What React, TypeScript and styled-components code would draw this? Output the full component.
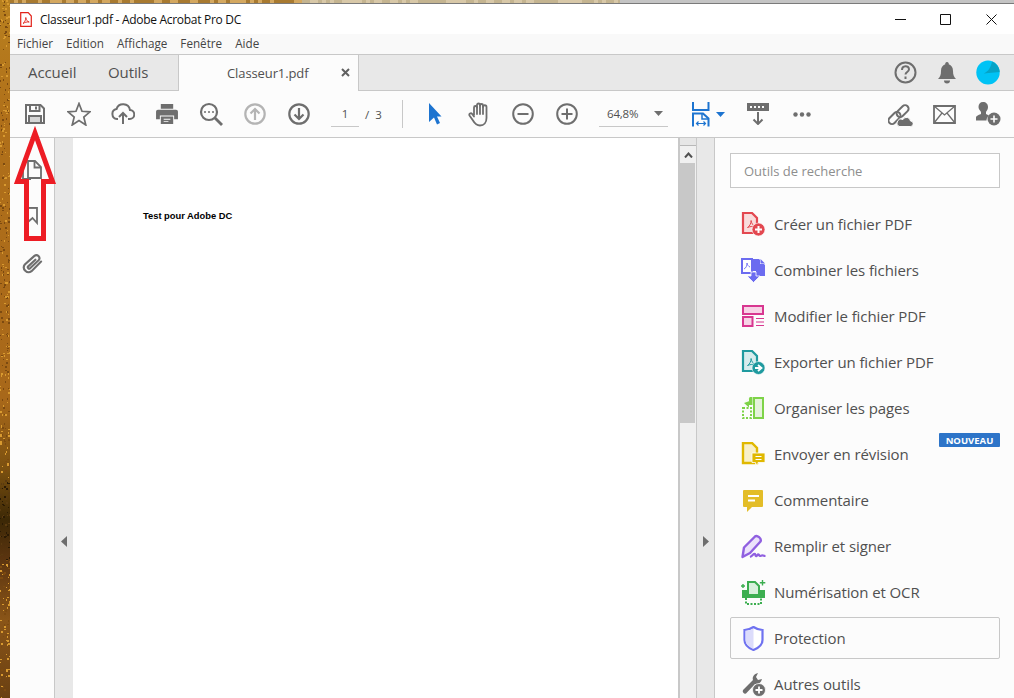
import React from "react";
import styled, { createGlobalStyle } from "styled-components";

const Global = createGlobalStyle`
  html, body { margin: 0; padding: 0; width: 1014px; height: 698px; overflow: hidden; }
  body { font-family: "Open Sans", "Noto Sans", sans-serif; color: #505050; }
  #root { width: 1014px; height: 698px; }
  svg { display: block; }
`;

const Desktop = styled.div`
  position: relative; width: 1014px; height: 698px; overflow: hidden; box-sizing: border-box;
  padding: 3px 0 0 10px; display: flex;
  background: linear-gradient(180deg, #b8801f 0, #b0701a 120px, #a8681a 400px, #7a5010 470px, #3c2806 520px, #5c3510 560px, #8a5518 620px, #6a4012 698px);
`;
const Wallpaper = styled.svg`position: absolute; left: 0; top: 0; pointer-events: none;`;
const Window = styled.div`
  position: relative; flex: 1; min-width: 0; display: flex; flex-direction: column; background: #fff;
  border-top: 1px solid #7a7a7a;
`;
const TitleBar = styled.div`height: 30px; display: flex; align-items: center; padding-left: 10px; background: #fff; flex: none;`;
const TitleText = styled.span`
  margin-left: 8px; font-size: 12px; color: #111; letter-spacing: -0.29px; flex: 1; white-space: nowrap;
`;
const WinButton = styled.div`width: 45.5px; height: 30px; display: flex; align-items: center; justify-content: center;`;
const MenuBar = styled.div`
  height: 21px; background: #f9f9f9; display: flex; align-items: center; gap: 13px; padding: 0 0 2px 7px; flex: none; box-sizing: border-box;
  border-bottom: 1px solid #c8c8c8;
`;
const MenuItem = styled.span`font-size: 11.7px; color: #444;`;
const TabBar = styled.div`
  height: 36px; background: #e8e8e8; display: flex; align-items: stretch; flex: none; box-sizing: border-box;
  border-bottom: 1px solid #c8c8c8;
`;
const NavTab = styled.div`
  font-size: 15px; color: #505050; display: flex; align-items: center; letter-spacing: -0.1px;
  width: 84px; padding: 0 0 2px 18px; box-sizing: border-box;
`;
const NavTabNarrow = styled(NavTab)`width: 84px; padding-left: 14px;`;
const DocTab = styled.div`
  width: 181px; margin-bottom: -1px; background: #fcfcfc; border-left: 1px solid #c8c8c8; border-right: 1px solid #c8c8c8;
  box-sizing: border-box; display: flex; align-items: center; padding-left: 48px; position: relative; font-size: 13px; color: #505050;
  letter-spacing: -0.1px;
`;
const TabClose = styled.span`position: absolute; left: 162px; top: 13px;`;
const TabRight = styled.div`flex: 1; display: flex; justify-content: flex-end; align-items: center; padding-right: 14px; gap: 20.5px;`;
const Toolbar = styled.div`
  height: 47px; background: #fcfcfc; border-bottom: 1px solid #c8c8c8; box-sizing: border-box; display: flex; align-items: center;
  padding: 0 4px 0 3px; flex: none;
`;
const ToolButton = styled.div`width: 44px; height: 46px; display: flex; align-items: center; justify-content: center; flex: none;`;
const PageBox = styled.div`
  margin-left: 10px; width: 28px; height: 26px; border-bottom: 1px solid #c8c8c8; display: flex; align-items: center; justify-content: center;
  font-size: 11.5px; color: #505050; box-sizing: border-box; flex: none;
`;
const PageCount = styled.div`margin-left: 6px; width: 37px; font-size: 11.5px; color: #505050; word-spacing: 3px; flex: none;`;
const Separator = styled.div`width: 1px; height: 28px; background: #c8c8c8; margin-right: 10px; flex: none;`;
const ZoomBox = styled.div`
  margin-left: 10px; width: 69px; height: 26px; border-bottom: 1px solid #c8c8c8; display: flex; align-items: center; justify-content: space-between;
  box-sizing: border-box; padding: 0 5px 0 8px; font-size: 11.5px; color: #505050; letter-spacing: -0.2px; flex: none;
`;
const FitButton = styled.div`width: 56px; margin-left: 12px; padding-left: 12px; box-sizing: border-box; display: flex; align-items: center; gap: 6px; flex: none; height: 46px;`;
const Spacer = styled.div`flex: 1;`;
const Main = styled.div`flex: 1; display: flex; min-height: 0;`;
const Rail = styled.div`
  width: 44px; flex: none; background: #fcfcfc; border-right: 1px solid #c8c8c8; display: flex; flex-direction: column; align-items: center;
  padding-top: 22px; box-sizing: content-box;
`;
const RailItem = styled.div<{ $h: number }>`height: ${p => p.$h}px; display: flex; justify-content: center; flex: none;`;
const Gutter = styled.div<{ $w: number; $border?: boolean }>`
  width: ${p => p.$w}px; flex: none; background: #e8e8e8; display: flex; justify-content: center; padding-top: 398px; box-sizing: border-box;
  ${p => p.$border ? "border-left: 1px solid #c8c8c8; border-right: 1px solid #c8c8c8;" : ""}
`;
const PageView = styled.div`flex: 1; min-width: 0; background: #fff; padding: 72px 0 0 70px; box-sizing: border-box; border-right: 2px solid #c8c8c8;`;
const PdfText = styled.div`font-family: "Liberation Sans", Arial, sans-serif; font-weight: 700; font-size: 9.35px; color: #000; line-height: 12px;`;
const ScrollBar = styled.div`width: 16px; flex: none; background: #f0f0f0; display: flex; flex-direction: column;`;
const ScrollHead = styled.div`height: 8px; background: #e6e6e6; border-bottom: 1px solid #b8b8b8; box-sizing: border-box; flex: none;`;
const ScrollUp = styled.div`height: 17px; display: flex; align-items: center; justify-content: center; flex: none;`;
const ScrollThumb = styled.div`height: 260px; background: #c8c8c8; flex: none; margin: 0 1px 0 0;`;
const Panel = styled.div`
  width: 299px; flex: none; background: #fcfcfc; box-sizing: border-box; padding: 15px 14px 0 15px; display: flex; flex-direction: column; gap: 4px;
`;
const SearchBox = styled.div`
  height: 35px; background: #fff; border: 1px solid #c8c8c8; box-sizing: border-box; font-size: 13px; color: #8e8e8e; display: flex; align-items: center;
  padding: 1px 0 0 13px; margin-bottom: 11px; flex: none;
`;
const Row = styled.div<{ $active?: boolean }>`
  position: relative; height: 42px; flex: none; box-sizing: border-box; display: flex; align-items: center; gap: 8px; padding-left: 10px;
  border: 1px solid ${p => p.$active ? "#c8c8c8" : "transparent"}; border-radius: 2px; font-size: 15px; color: #505050; letter-spacing: -0.1px; white-space: nowrap;
`;
const Badge = styled.span`
  position: absolute; right: -1px; top: -1px; width: 61px; height: 14px; background: #2d74c8; border-radius: 1px; color: #fff; font-size: 9.5px;
  font-weight: 700; display: flex; align-items: center; justify-content: center; letter-spacing: 0;
`;
const Arrow = styled.svg`position: absolute; left: -10px; top: -3px; pointer-events: none;`;

const G = "#6e6e6e";

const wall = (() => {
  let s = 7;
  const r = () => (s = (s * 16807) % 2147483647) / 2147483647;
  const out: { x: number; y: number; w: number; h: number; c: string }[] = [];
  for (let i = 0; i < 420; i++) {
    const y = r() * 698;
    const dark = y > 480 && y < 560;
    const c = r() > 0.55 ? (dark ? "#5a3a10" : "#d89a30") : (dark ? "#2a1a04" : "#7c4a10");
    out.push({ x: Math.floor(r() * 10), y: Math.floor(y), w: 1 + Math.floor(r() * 2), h: 1 + Math.floor(r() * 2), c });
  }
  for (let x = 10; x < 620; x += 4) {
    const t = r();
    out.push({ x, y: 0, w: 4, h: 3, c: x < 300 ? (t > 0.5 ? "#d4a860" : "#a87a30") : (t > 0.5 ? "#d8c8a8" : "#c4b490") });
  }
  out.push({ x: 620, y: 0, w: 394, h: 3, c: "#c4c4c4" });
  return out;
})();

const Pdf = ({ c }: { c: string }) => (
  <path d="M6.500 15.500c2-1 3.600-4 3.600-7 .4 3 2 5.300 4.400 6-2.800-.3-5.800 0-8 1z" fill="none" stroke={c} strokeWidth="1" />
);

const SaveIcon = () => (
  <svg width="20" height="20" viewBox="0 0 20 20" fill="none" stroke={G} strokeWidth="2">
    <path d="M4 12h12v7H4z" fill="#d5d5d5" stroke="none" />
    <path d="M1 1h14.500L19 4.500V19H1z" />
    <path d="M5 1v6h9.500V1M4 19v-7h12v7" />
    <path d="M11 2.500v3" />
  </svg>
);
const StarIcon = () => (
  <svg width="24" height="24" viewBox="0 0 24 24" fill="none" stroke={G} strokeWidth="1.700" strokeLinejoin="miter">
    <path d="M12 1.500l3 7.800 8 .5-6.200 5.200 2 8-6.800-4.500L5.200 23l2-8L1 9.800l8-.5z" />
  </svg>
);
const UploadIcon = () => (
  <svg width="24" height="24" viewBox="0 0 24 24" fill="none" stroke={G} strokeWidth="2">
    <path d="M7 17H6a5 5 0 0 1-.5-9.900A7 7 0 0 1 19 8a4.500 4.500 0 0 1-.5 9H17" />
    <path d="M12 22V11M8 15l4-4 4 4" />
  </svg>
);
const PrintIcon = () => (
  <svg width="22" height="20" viewBox="0 0 23 21" fill={G}>
    <path d="M5 0h13v5H5z" />
    <path fillRule="evenodd" d="M2 6h19a2 2 0 0 1 2 2v8h-4v-4H4v4H0V8a2 2 0 0 1 2-2z" />
    <path fillRule="evenodd" d="M5 13h13v8H5zM8 15.500v1h7v-1zM8 18v1h5v-1z" />
  </svg>
);
const SearchIcon = () => (
  <svg width="24" height="24" viewBox="0 0 24 24" fill="none" stroke={G}>
    <circle cx="10" cy="10" r="8" strokeWidth="2.200" />
    <path d="M16 16l7 7" strokeWidth="2.800" />
    <path d="M6 10h.01M10 10h.01M14 10h.01" strokeWidth="2" strokeLinecap="round" />
  </svg>
);
const CircleArrow = ({ c, down }: { c: string; down?: boolean }) => (
  <svg width="22" height="22" viewBox="0 0 22 22" fill="none" stroke={c} strokeWidth="2.200">
    <circle cx="11" cy="11" r="9.700" />
    {down ? <path d="M11 5v11M6.500 11.500L11 16l4.500-4.500" /> : <path d="M11 17V6M6.500 10.500L11 6l4.500 4.500" />}
  </svg>
);
const CursorIcon = () => (
  <svg width="13" height="22" viewBox="0 0 13 22" fill="#1d74d0">
    <path d="M0 0l12.500 13.500H8L11 20l-3 1.500L5 14.500 0 19z" />
  </svg>
);
const HandIcon = () => (
  <svg width="24" height="25" viewBox="0 0 24 25" fill="none" stroke={G} strokeWidth="1.800" strokeLinecap="round" strokeLinejoin="round">
    <path d="M7 13V5.500a1.500 1.500 0 0 1 3 0V3a1.500 1.500 0 0 1 3 0v.5a1.500 1.500 0 0 1 3 0V5a1.700 1.700 0 0 1 3.500 0v11c0 4.500-2.500 7.500-6.500 7.500-3.500 0-5-1.500-7-5l-3.500-5c-1-1.700 1.500-3 2.700-1.500L7 14.500" />
    <path d="M10 5v7M13 3v9M16 4v8" />
  </svg>
);
const PlusMinus = ({ plus }: { plus?: boolean }) => (
  <svg width="22" height="22" viewBox="0 0 22 22" fill="none" stroke={G} strokeWidth="2">
    <circle cx="11" cy="11" r="9.800" />
    <path d="M5.500 11h11" />
    {plus && <path d="M11 5.500v11" />}
  </svg>
);
const Caret = ({ c }: { c: string }) => (
  <svg width="9" height="5" viewBox="0 0 9 5" fill={c}><path d="M0 0h9L4.500 5z" /></svg>
);
const FitIcon = () => (
  <svg width="18" height="25" viewBox="0 0 18 25" fill="none" stroke="#1d74d0" strokeWidth="2">
    <path d="M1 0v8h15.500V0" />
    <path d="M1 24.500V11.500h10l5.500 5v8" />
    <path d="M10 12v5h6" strokeWidth="1.500" />
    <path d="M4.500 21.500h9M6.500 19.500l-2 2 2 2M11.500 19.500l2 2-2 2" strokeWidth="1.200" />
  </svg>
);
const ExportIcon = () => (
  <svg width="22" height="22" viewBox="0 0 22 22" fill="none" stroke={G}>
    <path fillRule="evenodd" d="M0 0h22v8H0zM3 3v2h2V3zM7 3v2h2V3zM11 3v2h2V3zM15 3v2h2V3z" fill={G} stroke="none" />
    <path d="M11 9v12M6.500 16.500L11 21l4.500-4.500" strokeWidth="2" />
  </svg>
);
const DotsIcon = () => (
  <svg width="18" height="5" viewBox="0 0 18 5" fill={G}><circle cx="2.500" cy="2.500" r="2.200" /><circle cx="9" cy="2.500" r="2.200" /><circle cx="15.500" cy="2.500" r="2.200" /></svg>
);
const LinkCloudIcon = () => (
  <svg width="25" height="25" viewBox="0 0 25 25" fill="none" stroke={G} strokeWidth="2">
    <rect x="9" y="0" width="7" height="14" rx="3.500" transform="rotate(45 12.500 7) translate(3 0)" />
    <rect x="3" y="9" width="7" height="14" rx="3.500" transform="rotate(45 6.500 16)" />
    <path d="M11 24.500h11.500a2.500 2.500 0 0 0 0-5.500 4 4 0 0 0-7.500-1.500A3.500 3.500 0 0 0 11 24.500z" fill={G} stroke="#fcfcfc" strokeWidth="1" />
  </svg>
);
const MailIcon = () => (
  <svg width="23" height="19" viewBox="0 0 23 19" fill="none" stroke={G} strokeWidth="1.800">
    <path d="M1 1h21v17H1z" />
    <path d="M1 1l10.500 9L22 1M1 18l8-10M22 18l-8-10" strokeWidth="1.300" />
  </svg>
);
const AddUserIcon = () => (
  <svg width="25" height="24" viewBox="0 0 25 24" fill={G}>
    <path d="M7 0c3 0 5 2 5 5 0 2-1 3.500-2 5v2l3 1.500c-1.500 1-2.500 3-2.500 5H0v-3c0-2 4-3 5-3.500v-2C4 8.500 2.500 7 2.500 5 2.500 2 4 0 7 0z" />
    <circle cx="18" cy="17" r="6.500" />
    <path d="M18 13.500v7M14.500 17h7" stroke="#fcfcfc" strokeWidth="1.600" />
  </svg>
);
const HelpIcon = () => (
  <svg width="23" height="23" viewBox="0 0 23 23" fill="none" stroke={G} strokeWidth="2">
    <circle cx="11.500" cy="11.500" r="10" />
    <path d="M8 9c0-5 7-5 7-.7 0 2.700-3.500 2.700-3.500 5.200" />
    <path d="M11.500 15.500v2.500" />
  </svg>
);
const BellIcon = () => (
  <svg width="18" height="22" viewBox="0 0 18 22" fill={G}>
    <path d="M9 0a1.700 1.700 0 0 1 1.700 2.200C13.500 3 15 5.500 15 9c0 4 1 6 3 8H0c2-2 3-4 3-8 0-3.500 1.500-6 4.300-6.800A1.700 1.700 0 0 1 9 0z" />
    <path d="M6 18.500h6a3 3 0 0 1-6 0z" />
  </svg>
);
const Avatar = () => (
  <svg width="24" height="25" viewBox="0 0 24 25">
    <ellipse cx="12" cy="12.500" rx="11.700" ry="12" fill="#00c3f5" />
    <path d="M16 1.500c4 1.500 7.500 5.500 7.700 10.500L7.500 13.500c3-1 7-4 8.500-12z" fill="#05a3c6" />
  </svg>
);
const DocsIcon = () => (
  <svg width="20" height="21" viewBox="0 0 20 21" fill="none" stroke={G} strokeWidth="1.800">
    <path d="M1 5v14h8" />
    <path d="M6 1h7l6 6v11H6z" fill="#fcfcfc" />
    <path d="M12.500 1v6.500H19" />
  </svg>
);
const BookmarkIcon = () => (
  <svg width="11" height="22" viewBox="0 0 11 22" fill="none" stroke={G} strokeWidth="1.800"><path d="M1 0v15l4.500-4 4.500 5V0z" /><path d="M1 1h9" /></svg>
);
const ClipIcon = () => (
  <svg width="21" height="21" viewBox="0 0 22 22" fill="none" stroke={G} strokeWidth="2.200" strokeLinecap="round">
    <path d="M20 9L10 19a5 5 0 0 1-7-7L13 3a3.200 3.200 0 0 1 4.500 4.500L8.500 16a1.400 1.400 0 0 1-2-2L14 7" />
  </svg>
);

const Tool = ({ children }: { children: React.ReactNode }) => (
  <svg width="25" height="25" viewBox="0 0 25 25">{children}</svg>
);
const CreateTool = () => (
  <Tool>
    <path d="M2 1h9l5 5v15H2z" fill="#f9dcdc" stroke="#e34850" strokeWidth="2.200" />
    <Pdf c="#e34850" />
    <circle cx="17.500" cy="17.500" r="6.500" fill="#e34850" stroke="#fcfcfc" strokeWidth=".6" />
    <path d="M17.500 14v7M14 17.500h7" stroke="#fff" strokeWidth="2" />
  </Tool>
);
const CombineTool = () => (
  <Tool>
    <path d="M1 1h10v14H1z" fill="#fff" stroke="#6c6cf0" strokeWidth="2" />
    <path d="M12 1h6l6 6v11H15V13h-3z" fill="#6c6cf0" />
    <path d="M19 0l6 6h-6z" fill="#fcfcfc" />
    <path d="M19.500 1l4.500 4.500h-4.500z" fill="#6c6cf0" />
    <path d="M10 14v4H6l6.500 6.500L19 18h-4v-4z" fill="#6c6cf0" stroke="#fff" strokeWidth=".8" />
    <path d="M3 11c2-1 3-3 3-6 .4 2 1.500 3.500 3 4" fill="none" stroke="#6c6cf0" strokeWidth=".9" />
  </Tool>
);
const EditTool = () => (
  <Tool>
    <path d="M2 2h20v8H2z" fill="#f7d3e6" stroke="#d83790" strokeWidth="2" />
    <path d="M2 13h9.500v9H2z" fill="#f7d3e6" stroke="#d83790" strokeWidth="2" />
    <path d="M15 14.500h8M15 18h8M15 21.500h8" stroke="#d83790" strokeWidth="1.200" />
  </Tool>
);
const ExportTool = () => (
  <Tool>
    <path d="M2 1h9l5 5v15H2z" fill="#d6eced" stroke="#1f9a9f" strokeWidth="2.200" />
    <Pdf c="#1f9a9f" />
    <circle cx="17.500" cy="18" r="6.500" fill="#1f9a9f" stroke="#fcfcfc" strokeWidth=".6" />
    <path d="M14 18h5M17 15l3.500 3-3.500 3" stroke="#fff" strokeWidth="1.800" fill="none" />
  </Tool>
);
const OrganizeTool = () => (
  <Tool>
    <path d="M13 2h9v20H13z" fill="#e4f3da" stroke="#7ed348" strokeWidth="2" />
    <path d="M2 12h8v10H2z" fill="none" stroke="#7ed348" strokeWidth="2" strokeDasharray="2 1.500" />
    <path d="M3 7l5-4.500V5h3V1h-1.500 M3 7l5 4.500V9h3.500V1H8.500v4" fill="#7ed348" />
  </Tool>
);
const ReviewTool = () => (
  <Tool>
    <path d="M2 1h9l5 5v15H2z" fill="#f8f0c8" stroke="#e0b800" strokeWidth="2.400" />
    <path d="M11 11h13v9.500h-7l-2.500 3v-3H11z" fill="#e0b800" stroke="#fcfcfc" strokeWidth=".8" />
    <path d="M14.500 14.500h6M14.500 17.500h6" stroke="#fff" strokeWidth="1.200" />
  </Tool>
);
const CommentTool = () => (
  <Tool>
    <path d="M3 2h18a1 1 0 0 1 1 1v15a1 1 0 0 1-1 1H11l-5 5v-5H3a1 1 0 0 1-1-1V3a1 1 0 0 1 1-1z" fill="#e3bd28" />
    <path d="M7 8h11M7 12.500h7" stroke="#fff" strokeWidth="2" />
  </Tool>
);
const SignTool = () => (
  <Tool>
    <path d="M1.500 23L3 13.500 14 2.500c2-1.800 7 2 5.500 5L9 19z" fill="#ece2fb" stroke="#9060e0" strokeWidth="2.400" strokeLinejoin="round" />
    <path d="M9 23c3-1 3.500-4 5-3 .5 1 .5 2.500 1.500 2s1-2 2-1.500.5 1.500 1.500 1.500 1.500-1 3-.5 2 .5 2.500 .5" fill="none" stroke="#9060e0" strokeWidth="2.200" />
  </Tool>
);
const ScanTool = () => (
  <Tool>
    <path d="M1 10h23v8H1z" fill="#3cae50" />
    <path d="M7 2h7l4 4v9H7z" fill="#d8f0dc" stroke="#3cae50" strokeWidth="2" />
    <path d="M5 18v6h15v-6" fill="none" stroke="#3cae50" strokeWidth="2" strokeDasharray="2 1.500" />
    <path d="M21.500 0v5.500M18.800 2.700h5.500M2 4v4M0 6h4" stroke="#3cae50" strokeWidth="1.400" />
  </Tool>
);
const ShieldTool = () => (
  <Tool>
    <path d="M12.500 1c3 2 6 2.800 9 3v10c0 4.500-4 8-9 10-5-2-9-5.500-9-10V4c3-.2 6-1 9-3z" fill="#fff" stroke="#6f72f0" strokeWidth="2.200" />
    <path d="M12.500 2.500V23c-4.500-2-8-5-8-9V5c3 0 5.500-1 8-2.500z" fill="#dcdcfb" />
  </Tool>
);
const MoreTool = () => (
  <Tool>
    <path d="M2 18L12 8c-1-3 1-6 5-7l-2 4 2 3 4-1c-1 4-4 6-7 5L5 21.500a2.500 2.500 0 0 1-3-3.500z" fill={G} />
    <circle cx="18" cy="18" r="6.500" fill={G} stroke="#fcfcfc" strokeWidth=".8" />
    <path d="M18 14.500v7M14.500 18h7" stroke="#fff" strokeWidth="1.800" />
  </Tool>
);

const TOOLS: { label: string; icon: React.ReactNode; badge?: boolean; active?: boolean }[] = [
  { label: "Créer un fichier PDF", icon: <CreateTool /> },
  { label: "Combiner les fichiers", icon: <CombineTool /> },
  { label: "Modifier le fichier PDF", icon: <EditTool /> },
  { label: "Exporter un fichier PDF", icon: <ExportTool /> },
  { label: "Organiser les pages", icon: <OrganizeTool /> },
  { label: "Envoyer en révision", icon: <ReviewTool />, badge: true },
  { label: "Commentaire", icon: <CommentTool /> },
  { label: "Remplir et signer", icon: <SignTool /> },
  { label: "Numérisation et OCR", icon: <ScanTool /> },
  { label: "Protection", icon: <ShieldTool />, active: true },
  { label: "Autres outils", icon: <MoreTool /> },
];

const TOOLBAR_LEFT = [
  <SaveIcon />, <StarIcon />, <UploadIcon />, <PrintIcon />, <SearchIcon />, <CircleArrow c="#b4b4b4" />, <CircleArrow c={G} down />,
];

export default function App() {
  return (
    <Desktop>
      <Global />
      <Wallpaper width="1014" height="698">
        {wall.map((b, i) => <rect key={i} x={b.x} y={b.y} width={b.w} height={b.h} fill={b.c} />)}
      </Wallpaper>
      <Window>
        <TitleBar>
          <svg width="12" height="15" viewBox="0 0 12 15" fill="none" stroke="#e2231a" strokeWidth="1.200">
            <path d="M.7.700h7.500L11.300 4v10.300H.7z" fill="#fff" />
            <path d="M3 11.500c1.500-1 2.800-3.500 2.800-6 .3 2.500 1.500 4 3.400 4.500-2.200-.2-4.400.2-6.200 1.500z" strokeWidth=".9" />
          </svg>
          <TitleText>Classeur1.pdf - Adobe Acrobat Pro DC</TitleText>
          <WinButton><svg width="11" height="11" viewBox="0 0 11 11" stroke="#111"><path d="M0 5.500h11" /></svg></WinButton>
          <WinButton><svg width="11" height="11" viewBox="0 0 11 11" stroke="#111" fill="none"><path d="M.5.500h10v10H.5z" /></svg></WinButton>
          <WinButton><svg width="11" height="11" viewBox="0 0 11 11" stroke="#111"><path d="M.5.500l10 10M10.500.500l-10 10" /></svg></WinButton>
        </TitleBar>
        <MenuBar>
          {["Fichier", "Edition", "Affichage", "Fenêtre", "Aide"].map(m => <MenuItem key={m}>{m}</MenuItem>)}
        </MenuBar>
        <TabBar>
          <NavTab>Accueil</NavTab>
          <NavTabNarrow>Outils</NavTabNarrow>
          <DocTab>
            Classeur1.pdf
            <TabClose><svg width="9" height="9" viewBox="0 0 9 9" stroke="#606060" strokeWidth="2"><path d="M1 1l7 7M8 1L1 8" /></svg></TabClose>
          </DocTab>
          <TabRight>
            <HelpIcon />
            <BellIcon />
            <Avatar />
          </TabRight>
        </TabBar>
        <Toolbar>
          {TOOLBAR_LEFT.map((ic, i) => <ToolButton key={i}>{ic}</ToolButton>)}
          <PageBox>1</PageBox>
          <PageCount>/ 3</PageCount>
          <Separator />
          <ToolButton><CursorIcon /></ToolButton>
          <ToolButton><HandIcon /></ToolButton>
          <ToolButton><PlusMinus /></ToolButton>
          <ToolButton><PlusMinus plus /></ToolButton>
          <ZoomBox>64,8%<Caret c={G} /></ZoomBox>
          <FitButton><FitIcon /><Caret c="#1d74d0" /></FitButton>
          <ToolButton><ExportIcon /></ToolButton>
          <ToolButton><DotsIcon /></ToolButton>
          <Spacer />
          <ToolButton><LinkCloudIcon /></ToolButton>
          <ToolButton><MailIcon /></ToolButton>
          <ToolButton><AddUserIcon /></ToolButton>
        </Toolbar>
        <Main>
          <Rail>
            <RailItem $h={47}><DocsIcon /></RailItem>
            <RailItem $h={46}><BookmarkIcon /></RailItem>
            <RailItem $h={25}><ClipIcon /></RailItem>
          </Rail>
          <Gutter $w={18}>
            <svg width="6" height="11" viewBox="0 0 6 11" fill={G}><path d="M6 0v11L0 5.500z" /></svg>
          </Gutter>
          <PageView><PdfText>Test pour Adobe DC</PdfText></PageView>
          <ScrollBar>
            <ScrollHead />
            <ScrollUp><svg width="9" height="6" viewBox="0 0 9 6" fill="none" stroke="#505050" strokeWidth="2"><path d="M1 5.500l3.500-4 3.500 4" /></svg></ScrollUp>
            <ScrollThumb />
          </ScrollBar>
          <Gutter $w={19} $border>
            <svg width="6" height="11" viewBox="0 0 6 11" fill={G}><path d="M0 0v11l6-5.500z" /></svg>
          </Gutter>
          <Panel>
            <SearchBox>Outils de recherche</SearchBox>
            {TOOLS.map(t => (
              <Row key={t.label} $active={t.active}>
                {t.icon}
                {t.label}
                {t.badge && <Badge>NOUVEAU</Badge>}
              </Row>
            ))}
          </Panel>
        </Main>
        <Arrow width="70" height="250" viewBox="0 0 70 250">
          <path d="M35 132L17.500 180.500h9v57h17v-57h9z" fill="none" stroke="#ed1c24" strokeWidth="5" strokeLinejoin="miter" />
        </Arrow>
      </Window>
    </Desktop>
  );
}
